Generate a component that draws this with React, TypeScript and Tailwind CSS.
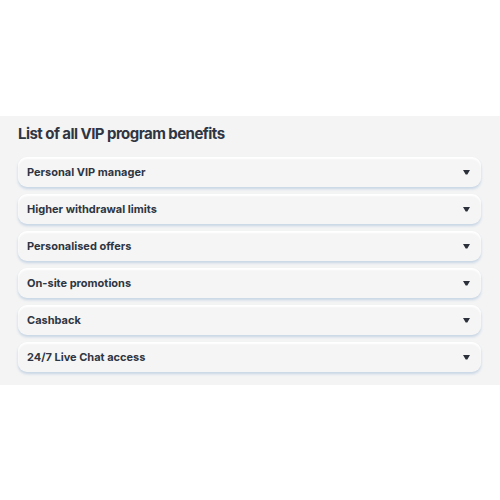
const benefits = [
  "Personal VIP manager",
  "Higher withdrawal limits",
  "Personalised offers",
  "On-site promotions",
  "Cashback",
  "24/7 Live Chat access",
];

function Caret() {
  return (
    <svg width="7" height="5" viewBox="0 0 7 5" className="shrink-0">
      <path d="M0 0 H7 L4.3 4.5 H2.7 Z" fill="#2b303a" />
    </svg>
  );
}

export default function App() {
  return (
    <div
      className="w-[500px] h-[500px] bg-white pt-[116px]"
      style={{ fontFamily: "Inter, 'Noto Sans', sans-serif" }}
    >
      <section className="bg-[#f4f4f4] px-[18px] pt-[8px] pb-[13px]">
        <h2 className="text-[15px] leading-[20px] font-bold text-[#2f3542] tracking-[-0.55px] mb-[13px]">
          List of all VIP program benefits
        </h2>
        <div className="flex flex-col gap-[7px] pr-[1px]">
          {benefits.map((b) => (
            <button
              key={b}
              className="flex items-center justify-between h-[30px] rounded-[9px] bg-[#f5f5f5] pl-[9px] pr-[11px] text-left shadow-[inset_0_2px_2px_#ffffff,0_2px_3px_#c5d4e4]"
            >
              <span className="text-[11px] font-bold text-[#2f3542]">{b}</span>
              <Caret />
            </button>
          ))}
        </div>
      </section>
    </div>
  );
}
